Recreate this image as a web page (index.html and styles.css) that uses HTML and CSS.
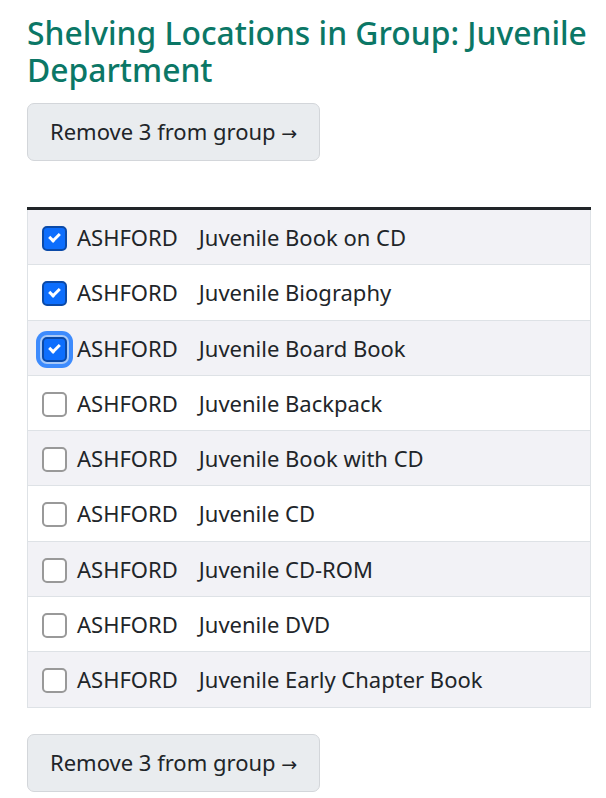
FILE: index.html
```html
<!DOCTYPE html>
<html>
<head>
<meta charset="utf-8">
<link rel="stylesheet" href="styles.css">
</head>
<body>
<main class="page">
  <h1 class="title">Shelving Locations in Group: Juvenile Department</h1>
  <button class="btn" type="button">Remove 3 from group <span class="arrow">→</span></button>
  <table class="tbl">
    <tbody>
      <tr class="odd"><td class="c1"><span class="cb on"></span>ASHFORD</td><td>Juvenile Book on CD</td></tr>
      <tr><td class="c1"><span class="cb on"></span>ASHFORD</td><td>Juvenile Biography</td></tr>
      <tr class="odd"><td class="c1"><span class="cb on focus"></span>ASHFORD</td><td>Juvenile Board Book</td></tr>
      <tr><td class="c1"><span class="cb"></span>ASHFORD</td><td>Juvenile Backpack</td></tr>
      <tr class="odd"><td class="c1"><span class="cb"></span>ASHFORD</td><td>Juvenile Book with CD</td></tr>
      <tr><td class="c1"><span class="cb"></span>ASHFORD</td><td>Juvenile CD</td></tr>
      <tr class="odd"><td class="c1"><span class="cb"></span>ASHFORD</td><td>Juvenile CD-ROM</td></tr>
      <tr><td class="c1"><span class="cb"></span>ASHFORD</td><td>Juvenile DVD</td></tr>
      <tr class="odd"><td class="c1"><span class="cb"></span>ASHFORD</td><td>Juvenile Early Chapter Book</td></tr>
    </tbody>
  </table>
  <button class="btn" type="button">Remove 3 from group <span class="arrow">→</span></button>
</main>
</body>
</html>
```
FILE: styles.css
```css
html, body { margin: 0; padding: 0; background: #fff; }
body { font-family: "Noto Sans", "Open Sans", sans-serif; color: #212529; }
.page { padding: 14px 15px 0 27px; display: flex; flex-direction: column; align-items: flex-start; }
.title { font-size: 31.8px; line-height: 37px; font-weight: 500; color: #0b7766; margin: 0 0 15px 0; }
.btn { font-family: inherit; font-size: 22px; line-height: 30px; color: #212529; background: #e9ecef; border: 1px solid #d3d6da; border-radius: 7px; padding: 12px 22px; cursor: pointer; }
.arrow { font-family: "DejaVu Sans", sans-serif; font-size: 19px; }
.tbl { width: 100%; border-collapse: collapse; margin: 46px 0 26px 0; border-top: 3px solid #212529; font-size: 22px; line-height: 30px; }
.tbl td { padding: 12px 0 12.3px 0; border-bottom: 1px solid #dee2e6; vertical-align: middle; white-space: nowrap; }
.tbl td.c1 { padding-left: 14px; padding-right: 21px; width: 1%; border-left: 1px solid #dee2e6; }
.tbl td:last-child { border-right: 1px solid #dee2e6; width: 100%; }
.tbl tr.odd td { background: #f2f2f6; }
.cb { display: inline-block; box-sizing: border-box; width: 25px; height: 25px; border: 2px solid #999; border-radius: 5px; background: #fff; vertical-align: -5px; margin-right: 10px; position: relative; }
.cb.on { background: #0d6efd; border-color: #0b4aa8; }
.cb.on::after { content: ""; position: absolute; width: 8px; height: 4px; border-left: 3px solid #fff; border-bottom: 3px solid #fff; transform: rotate(-45deg); top: 5px; left: 5px; }
.cb.focus { box-shadow: 0 0 0 2px #a8c9f8, 0 0 0 6px #3d8bfd; }
```
